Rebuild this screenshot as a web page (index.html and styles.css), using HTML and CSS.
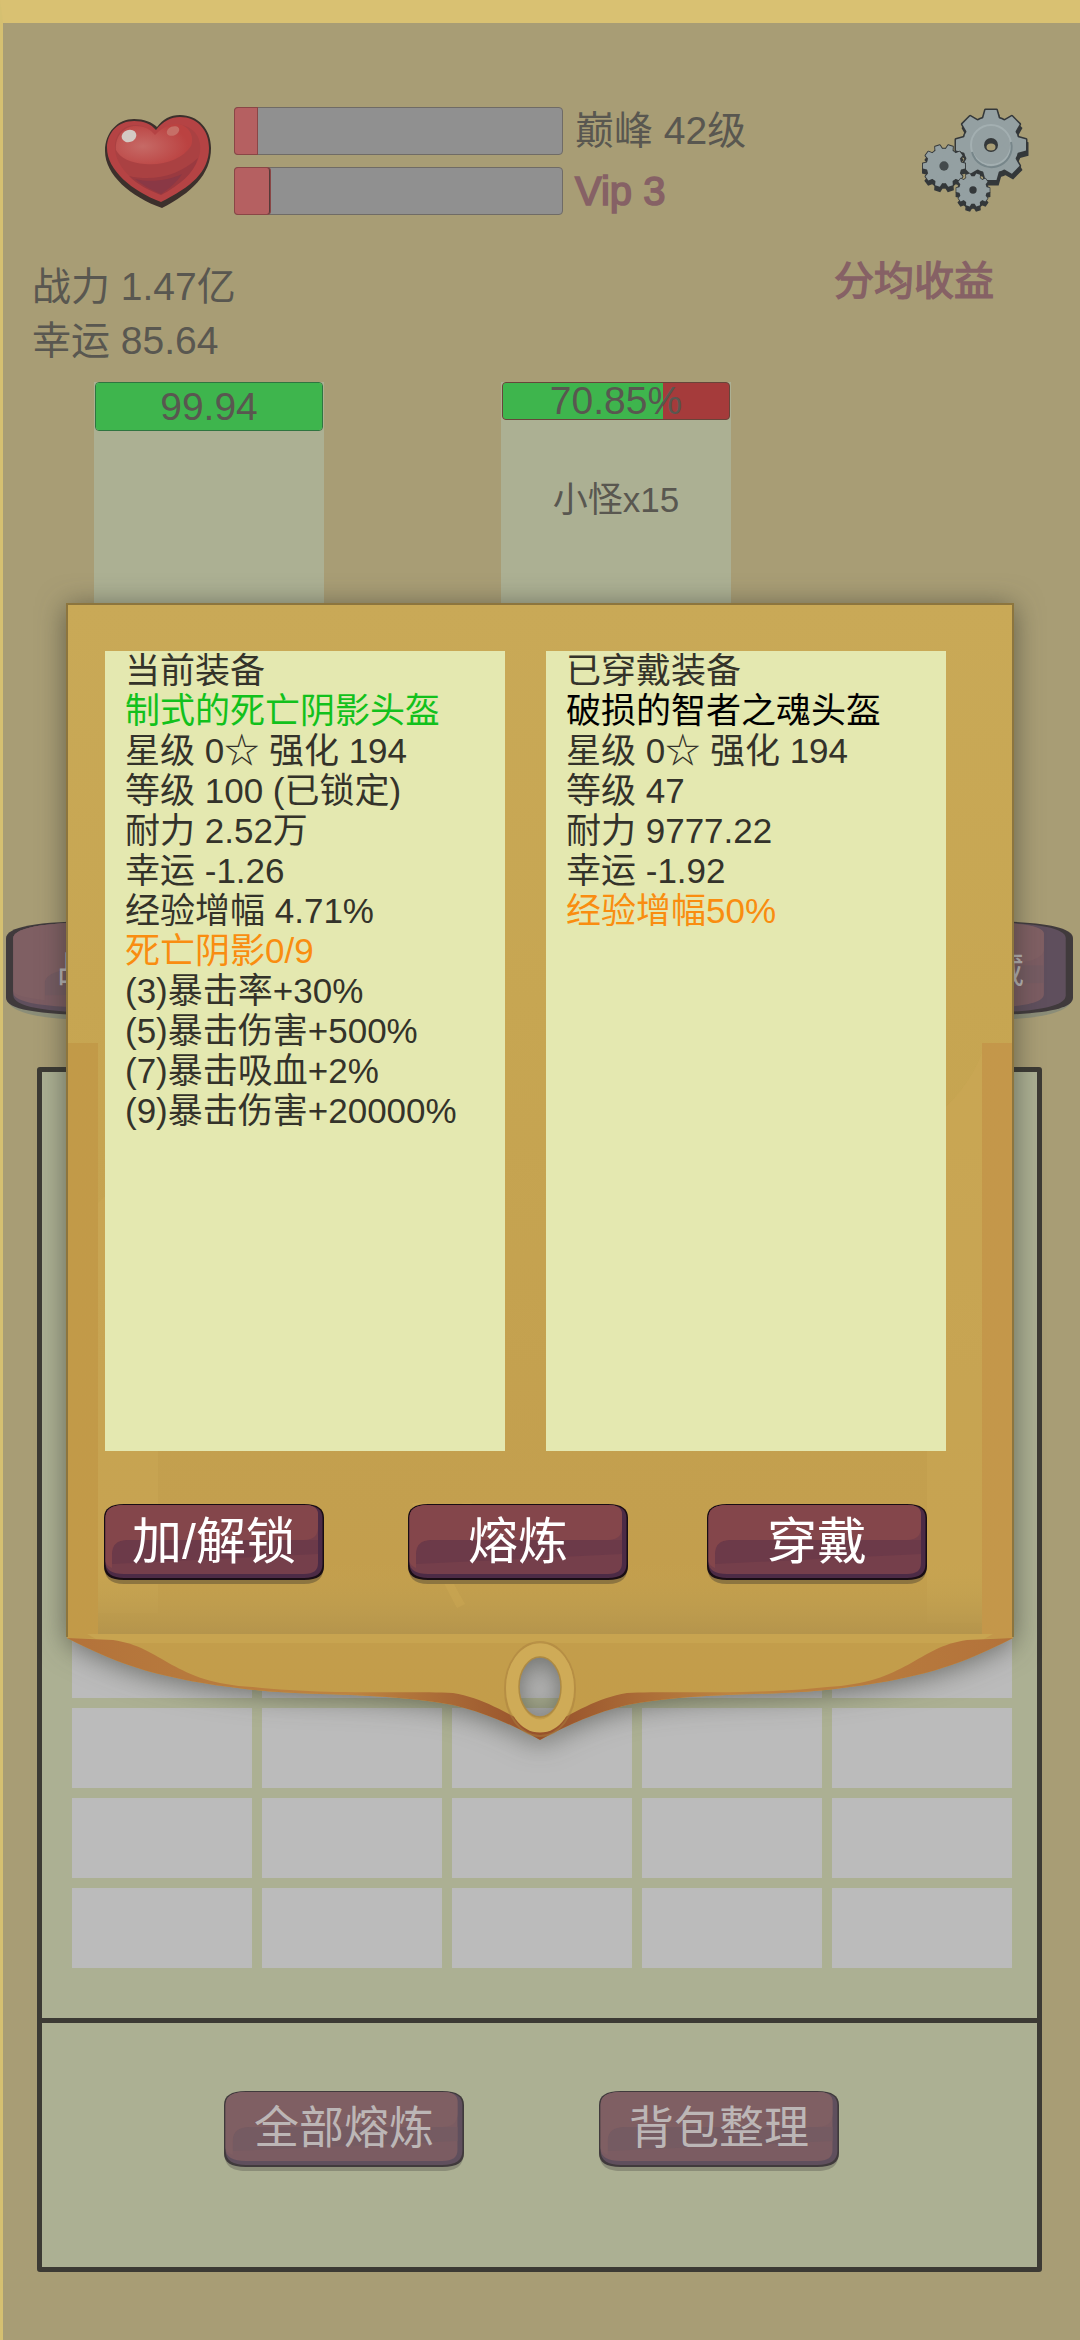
FILE: index.html
```html
<!DOCTYPE html>
<html lang="zh-CN">
<head>
<meta charset="utf-8">
<title>装备</title>
<link rel="stylesheet" href="styles.css">
</head>
<body>
<svg class="defs" aria-hidden="true">
  <symbol id="plate" viewBox="0 0 220 80" preserveAspectRatio="none">
    <path class="p-shadow" d="M0 60h220c0 14-6 20-20 20H20C6 80 0 74 0 60z"/>
    <path class="p-line" d="M20 0h180c14 0 20 5 20 14v48c0 9-6 14-20 14H20C6 76 0 71 0 62V14C0 5 6 0 20 0z"/>
    <path class="p-rim" d="M20 1h180c13 0 18.500 5 18.500 13v46c0 9-6 14-18.500 14H20C8 74 1.500 69 1.500 60V14C1.500 6 7 1 20 1z"/>
    <path class="p-low" d="M20 1h180c9 0 14 3 14 10v48c0 7-4 11-14 11H20C8 70 1.500 66 1.500 58V14C1.500 6 7 1 20 1z"/>
    <path class="p-mid" d="M8 50c0-9 5-14 15-14h191v14l-206 10z"/>
    <path class="p-top" d="M20 1h180c9 0 14 3 14 9v13c0 8-4 13-14 13H23c-10 0-15 5-15 14v14C4 62 1.500 60 1.500 56V14C1.500 6 7 1 20 1z"/>
  </symbol>
  <g id="gear8">
    <circle r="28"/>
    <path id="bar8" d="M-35-5.500L-26-8H26L35-5.500V5.500L26 8H-26L-35 5.500z"/>
    <use href="#bar8" transform="rotate(45)"/><use href="#bar8" transform="rotate(90)"/><use href="#bar8" transform="rotate(135)"/>
  </g>
  <g id="gear10">
    <circle r="28"/>
    <path id="bar10" d="M-34-4L-26-6H26L34-4V4L26 6H-26L-34 4z"/>
    <use href="#bar10" transform="rotate(36)"/><use href="#bar10" transform="rotate(72)"/><use href="#bar10" transform="rotate(108)"/><use href="#bar10" transform="rotate(144)"/>
  </g>
</svg>

<main class="screen">
  <header class="hud">
    <svg class="heart" viewBox="0 0 106 93">
      <defs><radialGradient id="gloss" cx=".35" cy=".55" r=".6"><stop offset="0" stop-color="#c66a66"/><stop offset="1" stop-color="#bb4241"/></radialGradient></defs>
      <path fill="#3c302c" d="M52 12C58 4 65 0 75 0c18 0 31 14 31 33 0 27-20 45-49 60C26 82 0 60 0 36 0 17 13 4 29 4c10 0 18 3 23 8z"/>
      <path fill="#b54344" d="M51 15C58 6 66 2 75 2c17 0 29 13 29 31 0 24-18 39-48 54C27 76 2 55 2 33 2 17 14 6 29 6c10 0 17 3 22 9z"/>
      <path fill="#aa4142" d="M50 22c8-10 18-14 27-12 13 3 20 14 18 27-2 17-20 33-39 43C33 71 10 54 10 32c0-13 9-22 20-22 8 0 15 4 20 12z"/>
      <path fill="#9a3a40" d="M24 61c25 6 51-1 69-18-4 15-18 27-37 37-13-5-24-11-32-19z"/>
      <path fill="#8a3845" d="M30 64c17 4 34 1 47-5-5 8-12 14-21 20-10-4-19-9-26-15z"/>
      <path fill="url(#gloss)" d="M50 20c9-9 18-13 27-10 9 4 12 13 9 21-8 13-28 20-46 18-14-1-25-6-29-14-1-14 8-24 20-24 8 0 14 3 19 9z"/>
      <ellipse cx="24" cy="21" rx="7.500" ry="6" fill="#d3cac4" transform="rotate(-18 24 21)"/>
      <ellipse cx="68" cy="16" rx="6.500" ry="4.500" fill="#c66f67" transform="rotate(-22 68 16)"/>
    </svg>
    <div class="gauges">
      <div class="gauge"><div class="fill" style="width:22px"></div></div>
      <div class="gauge"><div class="fill edged" style="width:35px"></div></div>
    </div>
    <div class="titles"><div class="rank">巅峰 42级</div><div class="vip">Vip 3</div></div>
    <svg class="gears" viewBox="0 0 108 106">
      <g transform="translate(70 37)"><use href="#gear8" class="g-dark" transform="translate(1 4)"/><use href="#gear8" class="g-line"/><use href="#gear8" class="g-face"/>
        <circle r="20" class="ring-light"/><path d="M20-3A20 20 0 0 1-19 7" class="ring-dark"/><circle r="7" fill="#34383a"/><ellipse cy="2" rx="4.500" ry="3.500" fill="#a89d75"/></g>
      <g transform="translate(23 58) scale(.62)"><use href="#gear10" class="g-dark" transform="translate(0 7)"/><use href="#gear10" class="g-line"/><use href="#gear10" class="g-face"/><circle r="7.500" fill="#434a4c"/></g>
      <g transform="translate(52 82) scale(.49)"><use href="#gear10" class="g-dark" transform="translate(0 9)"/><use href="#gear10" class="g-line"/><use href="#gear10" class="g-face"/><circle r="7.500" fill="#34383a"/></g>
    </svg>
  </header>

  <section class="stats">
    <div class="power"><div>战力 1.47亿</div><div>幸运 85.64</div></div>
    <div class="income">分均收益</div>
  </section>

  <section class="arena">
    <div class="fighter"><div class="hp tall"><div class="life" style="width:100%"></div><span>99.94</span></div></div>
    <div class="fighter"><div class="hp"><div class="life" style="width:70.85%"></div><span>70.85%</span></div><div class="foe">小怪x15</div></div>
  </section>

  <nav class="tabs dim"><svg class="plate"><use href="#plate"/></svg><span>战</span><span>藏</span></nav>

  <section class="bag">
    <div class="slots">
      <i></i><i></i><i></i><i></i><i></i>
      <i></i><i></i><i></i><i></i><i></i>
      <i></i><i></i><i></i><i></i><i></i>
      <i></i><i></i><i></i><i></i><i></i>
    </div>
    <div class="bag-actions">
      <button class="btn wide dim"><svg class="plate"><use href="#plate"/></svg><span>全部熔炼</span></button>
      <button class="btn wide dim"><svg class="plate"><use href="#plate"/></svg><span>背包整理</span></button>
    </div>
  </section>

  <section class="dialog">
    <svg class="board" viewBox="0 0 946 1150">
      <defs>
        <linearGradient id="wood" x1="0" y1="0" x2="0" y2="1"><stop offset="0" stop-color="#c9a957"/><stop offset=".35" stop-color="#c7a652"/><stop offset=".8" stop-color="#c39f4e"/><stop offset="1" stop-color="#c39c49"/></linearGradient>
        <linearGradient id="side" x1="0" y1="0" x2="1" y2="0"><stop offset="0" stop-color="#c29a48"/><stop offset="1" stop-color="#c4974a"/></linearGradient>
        <linearGradient id="foot" x1="0" y1="0" x2="0" y2="1"><stop offset="0" stop-color="#c6a652" stop-opacity="0"/><stop offset="1" stop-color="#b4944c"/></linearGradient>
        <linearGradient id="edge" x1="0" y1="0" x2="1" y2="0"><stop offset="0" stop-color="#b3723a"/><stop offset=".3" stop-color="#bd8441"/><stop offset=".5" stop-color="#96502b"/><stop offset=".7" stop-color="#bd8441"/><stop offset="1" stop-color="#b3723a"/></linearGradient>
      </defs>
      <path class="body" fill="url(#wood)" fill-rule="evenodd" d="M0 0H946V1035C890 1064 850 1076 768 1086C700 1094 640 1088 560 1102C530 1109 500 1122 473 1137C446 1122 416 1109 386 1102C306 1088 246 1094 178 1086C96 1076 56 1064 0 1035zM452 1084a21 30 0 1 0 42 0a21 30 0 1 0-42 0z"/>
      <path fill="url(#side)" d="M0 440h31v595H0zM915 440h31v595h-31z"/>
      <path fill="#cda956" opacity=".45" d="M31 600q40-40 60-20v430H31zM860 520q40-30 55-70v570h-55z"/>
      <path fill="url(#foot)" d="M31 960H915V1032H31z"/>
      <path fill="#d0ac55" opacity=".35" d="M345 900q20 60 45 105l8-4q-30-50-38-101zM395 900q10 30 22 50l6-3q-14-22-18-47z"/>
      <path fill="#c8a450" d="M20 1031H926L910 1040H36z"/>
      <path fill="url(#edge)" fill-rule="evenodd" d="M0 1035C56 1064 96 1076 178 1086C246 1094 306 1088 386 1102C416 1109 446 1122 473 1137C500 1122 530 1109 560 1102C640 1088 700 1094 768 1086C850 1076 890 1064 946 1035L900 1037C850 1044 840 1080 760 1084C690 1092 600 1088 560 1090C530 1095 510 1108 473 1128C436 1108 416 1095 386 1090C346 1088 256 1092 186 1084C106 1080 96 1044 46 1037z"/>
      <ellipse cx="473" cy="1086" rx="35" ry="47" fill="none" stroke="#a9803d" stroke-width="2" opacity=".5"/>
      <ellipse cx="473" cy="1085" rx="27.500" ry="38" fill="none" stroke="#cfab57" stroke-width="13"/>
      <ellipse cx="473" cy="1084" rx="21" ry="30" fill="none" stroke="#ad8a44" stroke-width="1.500"/>
      <path fill="none" stroke="#8c753e" stroke-width="2" d="M0 1034V1H946V1034"/>
    </svg>
    <div class="papers">
      <div class="paper">
        <p>当前装备</p>
        <p class="green">制式的死亡阴影头盔</p>
        <p>星级 0☆ 强化 194</p>
        <p>等级 100 (已锁定)</p>
        <p>耐力 2.52万</p>
        <p>幸运 -1.26</p>
        <p>经验增幅 4.71%</p>
        <p class="orange">死亡阴影0/9</p>
        <p>(3)暴击率+30%</p>
        <p>(5)暴击伤害+500%</p>
        <p>(7)暴击吸血+2%</p>
        <p>(9)暴击伤害+20000%</p>
      </div>
      <div class="paper">
        <p>已穿戴装备</p>
        <p class="black">破损的智者之魂头盔</p>
        <p>星级 0☆ 强化 194</p>
        <p>等级 47</p>
        <p>耐力 9777.22</p>
        <p>幸运 -1.92</p>
        <p class="orange">经验增幅50%</p>
      </div>
    </div>
    <div class="actions">
      <button class="btn"><svg class="plate"><use href="#plate"/></svg><span>加/解锁</span></button>
      <button class="btn"><svg class="plate"><use href="#plate"/></svg><span>熔炼</span></button>
      <button class="btn"><svg class="plate"><use href="#plate"/></svg><span>穿戴</span></button>
    </div>
  </section>
</main>
</body>
</html>
```
FILE: styles.css
```css
* { box-sizing: border-box; }
body { margin: 0; font-family: "Liberation Sans", "Noto Sans CJK SC", sans-serif; }
p { margin: 0; }
.defs { position: absolute; width: 0; height: 0; }

.screen {
  position: relative;
  display: flex;
  flex-direction: column;
  width: 1080px;
  height: 2340px;
  overflow: hidden;
  background: #a89d75;
  border-top: 23px solid #d9c172;
  border-left: 3px solid #d5c071;
  color: #595750;
}

.hud { display: flex; height: 149px; flex: none; padding: 84px 51px 0 102px; }
.heart { width: 106px; height: 93px; margin: 8px 23px 0 0; flex: none; }
.gauges { display: flex; flex-direction: column; gap: 12px; width: 329px; height: 108px; }
.gauge { height: 48px; background: #909090; border: 1px solid #6f6b66; border-radius: 4px; }
.fill { height: 46px; background: #b56061; border-radius: 3px 0 0 3px; box-shadow: 0 0 0 1px #8a4646; }
.fill.edged { border-right: 1px solid #553a38; border-radius: 3px; }
.titles { font-size: 39px; line-height: 48px; margin: 0 0 0 12px; white-space: nowrap; }
.titles .vip { margin-top: 12px; font-size: 40px; color: #866165; -webkit-text-stroke: 1.6px #866165; }
.gears { width: 108px; height: 106px; margin: 1px 0 0 auto; overflow: visible; flex: none; }
.g-dark { fill: #34383a; stroke: #34383a; stroke-width: 3; }
.g-line { fill: #34383a; stroke: #34383a; stroke-width: 3; stroke-linejoin: round; }
.g-face { fill: #94a0a2; }
.ring-light { fill: none; stroke: #a3afb1; stroke-width: 2; }
.ring-dark { fill: none; stroke: #77868a; stroke-width: 2; }

.stats { display: flex; justify-content: space-between; height: 210px; flex: none; padding: 88px 86px 0 29px; font-size: 39px; line-height: 54px; }
.income { font-size: 40px; line-height: 43px; color: #866165; -webkit-text-stroke: 1.4px #866165; }

.arena { display: flex; gap: 177px; flex: none; height: 320px; padding-left: 91px; }
.fighter { width: 230px; background: #acb093; }
.hp { display: grid; height: 38px; margin: 0 1px; background: #a53b3b; border: 1px solid #67453a; border-radius: 4px; overflow: hidden; }
.hp > * { grid-area: 1 / 1; }
.hp.tall { height: 49px; border-color: #2f7540; }
.life { background: #3eb54d; }
.hp span { font-size: 39px; line-height: 36px; text-align: center; }
.hp.tall span { line-height: 47px; }
.foe { margin-top: 55px; text-align: center; font-size: 35px; line-height: 50px; }

.plate { position: absolute; inset: 0; width: 100%; height: 100%; }
.tabs { position: relative; display: flex; justify-content: space-between; flex: none; width: 1067px; height: 99px; margin: 219px 0 0 3px; padding: 0 49px 0 51px; font-size: 36px; line-height: 99px; color: #bcb8b8; }
.tabs span { position: relative; }

.btn { position: relative; width: 220px; height: 80px; padding: 0; border: 0; background: none; font: 50px/76px "Liberation Sans", "Noto Sans CJK SC", sans-serif; color: #fff; --shadow: #8d7540; --line: #190d14; --rim: #4c2b46; --low: #753f4b; --mid: #6c3a49; --top: #84464b; }
.btn span { position: relative; top: -2px; display: block; }
.dim { --shadow: #8b8d78; --line: #403a3c; --rim: #5f4f5d; --low: #7b5c62; --mid: #755b62; --top: #7f5f63; }
.btn.wide { width: 240px; font-size: 45px; line-height: 76px; color: #bcb6b6; }
.btn.dim { --shadow: #8b8d78; --line: #403a3c; --rim: #5f4f5d; --low: #7b5c62; --mid: #755b62; --top: #7f5f63; }
.p-shadow { fill: var(--shadow); }
.p-line { fill: var(--line); }
.p-rim { fill: var(--rim); }
.p-low { fill: var(--low); }
.p-mid { fill: var(--mid); }
.p-top { fill: var(--top); }

.bag { display: flex; flex-direction: column; flex: none; width: 1005px; height: 1205px; margin: 47px 0 0 34px; border: 5px solid #3c3a34; border-radius: 3px; background: #acb093; }
.slots { display: grid; grid-template-columns: repeat(5, 180px); grid-auto-rows: 80px; gap: 10px; align-content: end; height: 951px; padding: 0 0 50px 30px; border-bottom: 5px solid #3c3a34; }
.slots i { background: #bbb; }
.bag-actions { display: flex; gap: 135px; padding: 68px 0 0 182px; }

.dialog { position: absolute; left: 64px; top: 580px; width: 946px; height: 1150px; }
.board { position: absolute; inset: 0; overflow: visible; filter: drop-shadow(0 3px 14px rgba(40, 42, 35, .55)); }
.papers { position: relative; display: flex; gap: 41px; padding: 48px 0 0 38px; }
.paper { width: 400px; height: 800px; padding-left: 20px; background: #e4e8b0; font-size: 35px; line-height: 40px; color: #34332a; white-space: nowrap; }
.paper p { height: 40px; }
.paper .green { color: #12c11c; }
.paper .orange { color: #f98d10; }
.paper .black { color: #000; }
.actions { position: relative; display: flex; gap: 79px; padding: 53px 0 0 37px; }
.actions .btn:nth-child(2) { margin-left: 5px; }
```
